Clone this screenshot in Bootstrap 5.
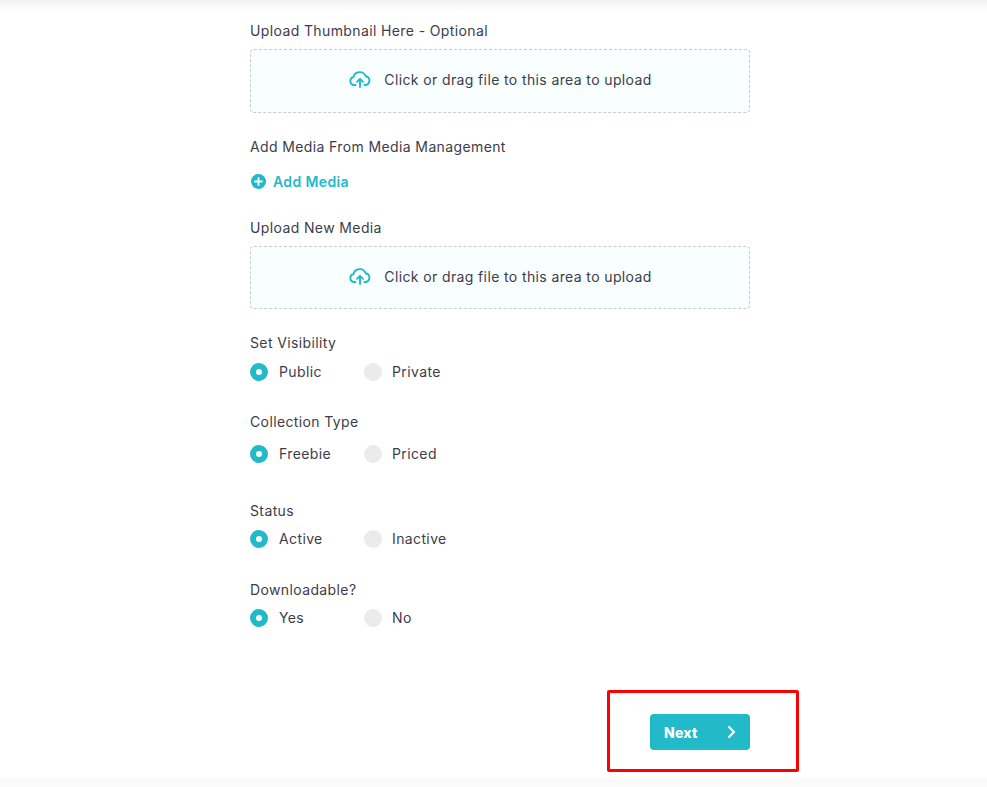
<!DOCTYPE html>
<html lang="en">
<head>
<meta charset="utf-8">
<title>Upload</title>
<link href="https://cdn.jsdelivr.net/npm/bootstrap@5.3.0/dist/css/bootstrap.min.css" rel="stylesheet">
<style>
html,body{height:100%;overflow:hidden}
body{background:#fff;font-family:Inter,"Noto Sans",sans-serif;font-size:14px;color:#3d3d4a;letter-spacing:.38px}
.page-shell{height:787px;width:987px;position:relative;background:linear-gradient(#f1f1f1,#fff 11px)}
.page-foot{height:9px;background:#fbfbfb;position:absolute;left:0;right:0;bottom:0}
.form-col{width:500px;margin-left:250px;padding-top:22px}
.lbl{line-height:18px;height:18px}
.drop{height:63px;margin-top:9px;padding-bottom:3px;border:1px dashed #c9cccc;border-radius:4px;background:#f9feff;gap:13px}
.drop-first{height:64px}
.drop svg{margin-left:1px}
.add-media{height:20px;margin-top:15px;gap:6px;color:#22b9c9;font-weight:600;font-size:14px}
.radios{height:20px}
.radio-item{width:114px;gap:11px}
.radio-item:last-child{gap:10px}
.rtext{padding-bottom:2px}
.dot{width:18px;height:18px;border-radius:50%;background:#ebebeb;flex:none}
.dot-on{background:#22b9c9;border:6px solid #22b9c9;position:relative}
.dot-on::after{content:"";position:absolute;inset:0;background:#fff;border-radius:50%}
.next-wrap{width:100px;height:36px;margin-top:86px;margin-left:400px;position:relative}
.next-btn{width:100px;height:36px;background:#22b9c9;border:0;border-radius:4px;color:#fff;font-weight:800;font-size:14px;padding:0 14px;letter-spacing:.2px}
.next-btn:hover{background:#22b9c9;color:#fff}
.red-box{position:absolute;left:-43px;top:-24px;width:192px;height:82px;border:3px solid #f00;border-radius:2px;pointer-events:none}
.g1{margin-top:25px}.g2{margin-top:28px}.g3{margin-top:25px}.g4{margin-top:31px}.g5{margin-top:38px}.g6{margin-top:32px}
.r1{margin-top:10px}.r2{margin-top:13px}.r3{margin-top:9px}.r4{margin-top:9px}
</style>
</head>
<body>
<div class="page-shell">
<div class="form-col">
  <div class="lbl">Upload Thumbnail Here - Optional</div>
  <div class="drop drop-first d-flex align-items-center justify-content-center">
    <svg width="22" height="17" viewBox="0 0 22 17" fill="none" stroke="#22b9c9" stroke-width="1.9" stroke-linecap="round" stroke-linejoin="round"><path d="M6.500 14H5.200a4 4 0 0 1-.7-7.900A6.400 6.400 0 0 1 16.700 5.200 4.500 4.500 0 0 1 17 14h-1.500"/><path d="M11 16V8M8 10.800l3-3 3 3"/></svg>
    <span>Click or drag file to this area to upload</span>
  </div>
  <div class="lbl g1">Add Media From Media Management</div>
  <div class="add-media d-flex align-items-center">
    <svg width="17" height="17" viewBox="0 0 17 17"><circle cx="8.500" cy="8.500" r="7.500" fill="#22b9c9"/><path d="M8.500 5v7M5 8.500h7" stroke="#fff" stroke-width="1.800" stroke-linecap="round"/></svg>
    <span>Add Media</span>
  </div>
  <div class="lbl g2">Upload New Media</div>
  <div class="drop d-flex align-items-center justify-content-center">
    <svg width="22" height="17" viewBox="0 0 22 17" fill="none" stroke="#22b9c9" stroke-width="1.9" stroke-linecap="round" stroke-linejoin="round"><path d="M6.500 14H5.200a4 4 0 0 1-.7-7.900A6.400 6.400 0 0 1 16.700 5.200 4.500 4.500 0 0 1 17 14h-1.500"/><path d="M11 16V8M8 10.800l3-3 3 3"/></svg>
    <span>Click or drag file to this area to upload</span>
  </div>
  <div class="lbl g3">Set Visibility</div>
  <div class="radios r1 d-flex">
    <div class="radio-item d-flex align-items-center"><span class="dot dot-on"></span><span class="rtext">Public</span></div>
    <div class="radio-item d-flex align-items-center"><span class="dot"></span><span class="rtext">Private</span></div>
  </div>
  <div class="lbl g4">Collection Type</div>
  <div class="radios r2 d-flex">
    <div class="radio-item d-flex align-items-center"><span class="dot dot-on"></span><span class="rtext">Freebie</span></div>
    <div class="radio-item d-flex align-items-center"><span class="dot"></span><span class="rtext">Priced</span></div>
  </div>
  <div class="lbl g5">Status</div>
  <div class="radios r3 d-flex">
    <div class="radio-item d-flex align-items-center"><span class="dot dot-on"></span><span class="rtext">Active</span></div>
    <div class="radio-item d-flex align-items-center"><span class="dot"></span><span class="rtext">Inactive</span></div>
  </div>
  <div class="lbl g6">Downloadable?</div>
  <div class="radios r4 d-flex">
    <div class="radio-item d-flex align-items-center"><span class="dot dot-on"></span><span class="rtext">Yes</span></div>
    <div class="radio-item d-flex align-items-center"><span class="dot"></span><span class="rtext">No</span></div>
  </div>
  <div class="next-wrap">
    <button type="button" class="btn next-btn d-flex align-items-center justify-content-between">
      <span>Next</span>
      <svg width="10" height="14" viewBox="0 0 10 14" fill="none" stroke="#fff" stroke-width="2.2" stroke-linecap="round" stroke-linejoin="round"><path d="M3 2l5 5-5 5"/></svg>
    </button>
    <div class="red-box"></div>
  </div>
</div>
<div class="page-foot"></div>
</div>
</body>
</html>
